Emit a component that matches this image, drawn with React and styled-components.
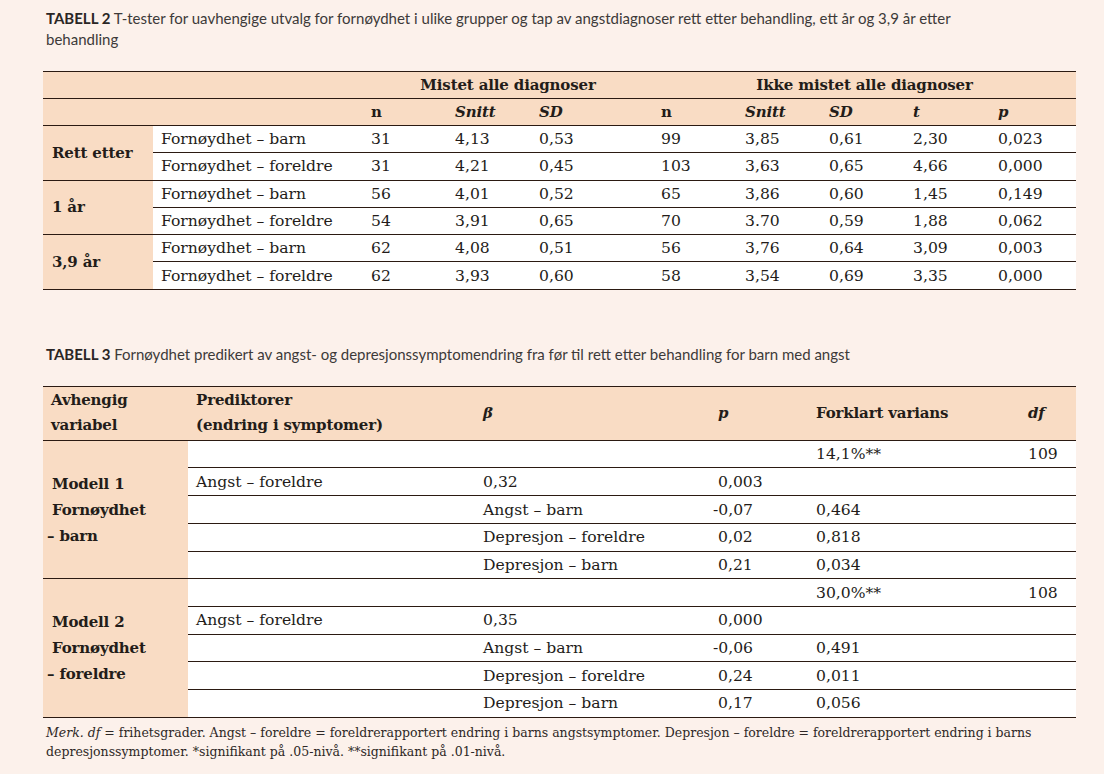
import React from "react";
import styled, { createGlobalStyle } from "styled-components";

const ink = "#231c19";
const rule = "#2b1a12";
const peach = "#f9dcc4";

const GlobalStyle = createGlobalStyle`
  body {
    margin: 0;
    background: #fcf1eb;
  }
`;

const Page = styled.div`
  padding: 8px 28px 20px 43px;
  font-family: "DejaVu Serif", "Liberation Serif", serif;
  color: ${ink};
`;

const Caption = styled.p`
  margin: ${(p) => p.$top || 0}px 0 ${(p) => p.$gap}px 3px;
  font-family: Lato, "Noto Sans", sans-serif;
  font-size: 15px;
  line-height: 21px;
  color: #3d3a39;

  b {
    font-weight: 700;
    color: #2a2625;
  }
`;

const Table = styled.table`
  width: 1033px;
  border-collapse: collapse;
  table-layout: fixed;
  border-top: 1.5px solid ${rule};
  border-bottom: 1.5px solid ${rule};
`;

const HeadCell = styled.th`
  background: ${peach};
  height: ${(p) => p.$h || 26}px;
  padding: 0 8px;
  font-size: 15px;
  font-weight: 700;
  letter-spacing: -0.15px;
  line-height: 25px;
  font-style: ${(p) => (p.$italic ? "italic" : "normal")};
  text-align: ${(p) => p.$align || "left"};
  vertical-align: middle;
  white-space: nowrap;
  border-bottom: 1.5px solid ${rule};
`;

const GroupCell = styled.td`
  background: ${peach};
  padding: 0 6px 0 9px;
  font-size: 15px;
  font-weight: 700;
  letter-spacing: -0.15px;
  line-height: 26px;
  vertical-align: middle;
  white-space: nowrap;
  border-top: 1.5px solid ${rule};
`;

const Cell = styled.td`
  background: #fff;
  height: ${(p) => p.$h}px;
  padding: 0 8px;
  font-size: 15.6px;
  white-space: nowrap;
  vertical-align: middle;
  border-top: ${(p) => (p.$first ? 1.5 : 1)}px solid ${rule};
`;

const Hang = styled.span`
  margin-left: -5px;
`;

const Note = styled.p`
  margin: 5px 0 0 3px;
  font-size: 12.5px;
  line-height: 19px;
  color: #2e2826;

  i {
    font-style: italic;
  }
`;

const t2Cols = [110, 210, 84, 84, 122, 84, 84, 84, 85, 86];

const t2Data = [
  {
    group: "Rett etter",
    rows: [
      ["Fornøydhet – barn", "31", "4,13", "0,53", "99", "3,85", "0,61", "2,30", "0,023"],
      ["Fornøydhet – foreldre", "31", "4,21", "0,45", "103", "3,63", "0,65", "4,66", "0,000"],
    ],
  },
  {
    group: "1 år",
    rows: [
      ["Fornøydhet – barn", "56", "4,01", "0,52", "65", "3,86", "0,60", "1,45", "0,149"],
      ["Fornøydhet – foreldre", "54", "3,91", "0,65", "70", "3.70", "0,59", "1,88", "0,062"],
    ],
  },
  {
    group: "3,9 år",
    rows: [
      ["Fornøydhet – barn", "62", "4,08", "0,51", "56", "3,76", "0,64", "3,09", "0,003"],
      ["Fornøydhet – foreldre", "62", "3,93", "0,60", "58", "3,54", "0,69", "3,35", "0,000"],
    ],
  },
];

const t3Cols = [145, 287, 235, 98, 212, 56];

const t3Data = [
  {
    label: ["Modell 1", "Fornøydhet", "– barn"],
    rows: [
      ["", "", "", "14,1%**", "109"],
      ["Angst – foreldre", "0,32", "0,003", "", ""],
      ["", "Angst – barn", "-0,07", "0,464", ""],
      ["", "Depresjon – foreldre", "0,02", "0,818", ""],
      ["", "Depresjon – barn", "0,21", "0,034", ""],
    ],
  },
  {
    label: ["Modell 2", "Fornøydhet", "– foreldre"],
    rows: [
      ["", "", "", "30,0%**", "108"],
      ["Angst – foreldre", "0,35", "0,000", "", ""],
      ["", "Angst – barn", "-0,06", "0,491", ""],
      ["", "Depresjon – foreldre", "0,24", "0,011", ""],
      ["", "Depresjon – barn", "0,17", "0,056", ""],
    ],
  },
];

// values starting with a dash hang slightly into the left padding
const show = (v) => (v.startsWith("-") || v.startsWith("–") ? <Hang>{v}</Hang> : v);

const Cols = ({ widths }) => (
  <colgroup>
    {widths.map((w, i) => (
      <col key={i} style={{ width: w }} />
    ))}
  </colgroup>
);

const TableTwo = () => (
  <Table>
    <Cols widths={t2Cols} />
    <thead>
      <tr>
        <HeadCell colSpan={2} />
        <HeadCell colSpan={3} $align="center">Mistet alle diagnoser</HeadCell>
        <HeadCell colSpan={5} $align="center">Ikke mistet alle diagnoser</HeadCell>
      </tr>
      <tr>
        <HeadCell colSpan={2} />
        <HeadCell>n</HeadCell>
        <HeadCell $italic>Snitt</HeadCell>
        <HeadCell $italic>SD</HeadCell>
        <HeadCell>n</HeadCell>
        <HeadCell $italic>Snitt</HeadCell>
        <HeadCell $italic>SD</HeadCell>
        <HeadCell $italic>t</HeadCell>
        <HeadCell $italic>p</HeadCell>
      </tr>
    </thead>
    <tbody>
      {t2Data.map((g) =>
        g.rows.map((row, ri) => (
          <tr key={g.group + ri}>
            {ri === 0 && <GroupCell rowSpan={g.rows.length}>{g.group}</GroupCell>}
            {row.map((v, ci) => (
              <Cell key={ci} $h={26.3} $first={ri === 0}>
                {v}
              </Cell>
            ))}
          </tr>
        ))
      )}
    </tbody>
  </Table>
);

const TableThree = () => (
  <Table>
    <Cols widths={t3Cols} />
    <thead>
      <tr>
        <HeadCell $h={53}>
          Avhengig
          <br />
          variabel
        </HeadCell>
        <HeadCell>
          Prediktorer
          <br />
          (endring i symptomer)
        </HeadCell>
        <HeadCell $italic>β</HeadCell>
        <HeadCell $italic>p</HeadCell>
        <HeadCell>Forklart varians</HeadCell>
        <HeadCell $italic>df</HeadCell>
      </tr>
    </thead>
    <tbody>
      {t3Data.map((g, gi) =>
        g.rows.map((row, ri) => (
          <tr key={gi + "-" + ri}>
            {ri === 0 && (
              <GroupCell rowSpan={g.rows.length}>
                {g.label.map((l, li) => (
                  <div key={li}>{show(l)}</div>
                ))}
              </GroupCell>
            )}
            {row.map((v, ci) => (
              <Cell key={ci} $h={26.7} $first={ri === 0}>
                {show(v)}
              </Cell>
            ))}
          </tr>
        ))
      )}
    </tbody>
  </Table>
);

const App = () => {
  return (
    <>
      <GlobalStyle />
      <Page>
        <Caption $gap={21}>
          <b>TABELL 2</b> T-tester for uavhengige utvalg for fornøydhet i ulike grupper og tap av
          angstdiagnoser rett etter behandling, ett år og 3,9 år etter
          <br />
          behandling
        </Caption>
        <TableTwo />
        <Caption $top={54} $gap={21}>
          <b>TABELL 3</b> Fornøydhet predikert av angst- og depresjonssymptomendring fra før til
          rett etter behandling for barn med angst
        </Caption>
        <TableThree />
        <Note>
          <i>Merk. df</i> = frihetsgrader. Angst – foreldre = foreldrerapportert endring i barns
          angstsymptomer. Depresjon – foreldre = foreldrerapportert endring i barns
          <br />
          depresjonssymptomer. *signifikant på .05-nivå. **signifikant på .01-nivå.
        </Note>
      </Page>
    </>
  );
};

export default App;
